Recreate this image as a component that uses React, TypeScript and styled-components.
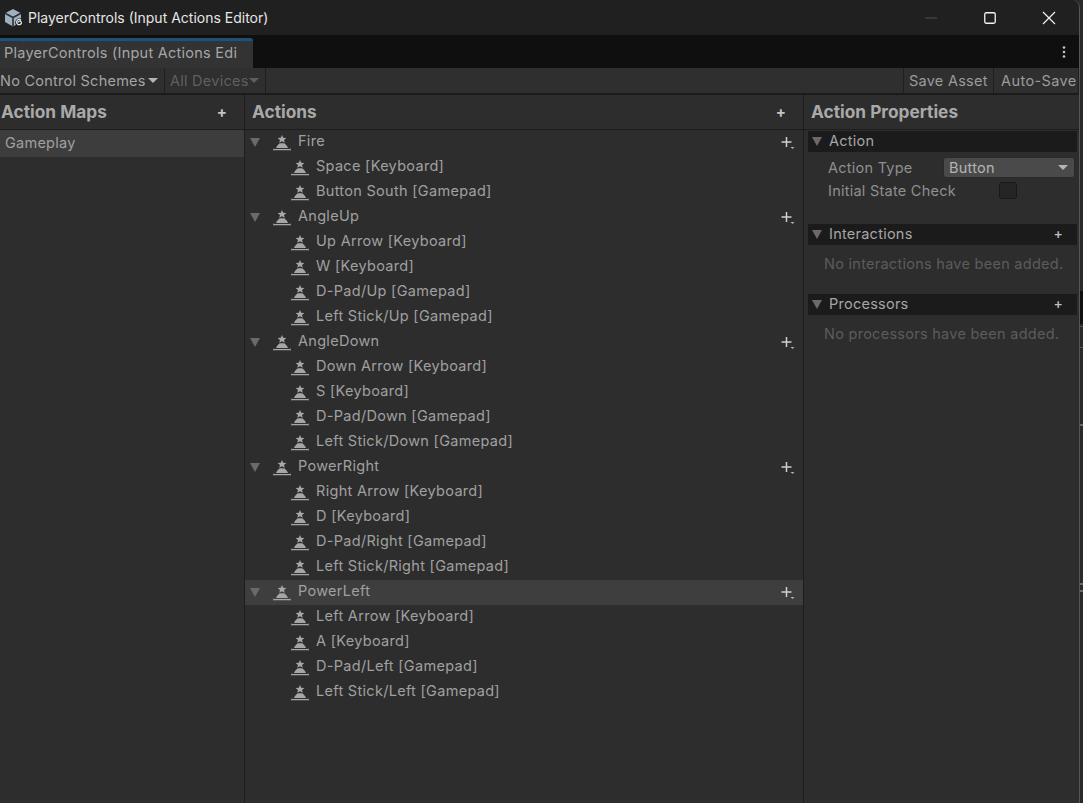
import React from "react"
import styled, { createGlobalStyle } from "styled-components"

const Global = createGlobalStyle`
  html, body {
    margin: 0;
    padding: 0;
    background: #2b2b2b;
  }
  body {
    font-family: Inter, "Noto Sans", sans-serif;
    font-size: 14.5px;
    color: #a8a8a8;
  }
`

const Page = styled.div`
  width: 1083px;
  height: 803px;
  display: flex;
  overflow: hidden;
  background: #2a2a2a;
`

const Window = styled.div`
  width: 1080px;
  flex: none;
  box-sizing: border-box;
  display: flex;
  flex-direction: column;
  background: #2d2d2d;
  border-right: 1px solid #565656;
  border-top-right-radius: 8px;
  overflow: hidden;
`

// the window behind this one peeks out at the right edge
const Backdrop = styled.div`
  flex: 1;
  position: relative;
`

const BehindMark = styled.div<{ $top: number; $height: number; $color: string }>`
  position: absolute;
  left: 0;
  right: 0;
  top: ${(p) => p.$top}px;
  height: ${(p) => p.$height}px;
  background: ${(p) => p.$color};
`

const TitleBar = styled.div`
  height: 35px;
  flex: none;
  display: flex;
  align-items: center;
  padding-left: 4px;
  background: #202020;
  color: #e6e6e6;
  font-size: 14px;
`

const TitleText = styled.span`
  margin-left: 4px;
  flex: 1;
`

const WinButton = styled.button`
  width: 59px;
  height: 32px;
  padding: 0;
  border: 0;
  background: none;
  display: flex;
  align-items: center;
  justify-content: center;
`

const WinButtons = styled.div`
  display: flex;
  margin-right: 1px;
`

const TabStrip = styled.div`
  height: 33px;
  flex: none;
  display: flex;
  align-items: flex-end;
  justify-content: space-between;
  background: #0f0f0f;
`

const Tab = styled.div`
  width: 253px;
  height: 30px;
  box-sizing: border-box;
  border-top: 3px solid #1f5279;
  border-top-right-radius: 3px;
  background: #333333;
  padding-left: 4px;
  color: #a6a6a6;
  font-size: 14.5px;
  letter-spacing: 0.25px;
  line-height: 24px;
  white-space: nowrap;
`

const Kebab = styled.div`
  width: 30px;
  height: 33px;
  display: flex;
  align-items: center;
  justify-content: center;
`

const Toolbar = styled.div`
  height: 27px;
  flex: none;
  box-sizing: border-box;
  display: flex;
  background: #2f2f2f;
  border-bottom: 2px solid #1b1b1b;
`

const ToolItem = styled.div<{ $dim?: boolean; $width: number }>`
  width: ${(p) => p.$width}px;
  box-sizing: border-box;
  border-right: 1px solid #1f1f1f;
  display: flex;
  align-items: center;
  justify-content: space-between;
  color: ${(p) => (p.$dim ? "#5f5f5f" : "#a4a4a4")};
  font-size: 14.5px;
  letter-spacing: 0.25px;
  padding: 0 6px 1px 0;
  white-space: nowrap;
`

const DimItem = styled(ToolItem)`
  padding-left: 5px;
`

const ToolSpacer = styled.div`
  flex: 1;
  border-right: 1px solid #1f1f1f;
`

const ToolButton = styled.div<{ $width: number; $pad: number; $spacing: number }>`
  width: ${(p) => p.$width}px;
  box-sizing: border-box;
  padding-left: ${(p) => p.$pad}px;
  border-right: 1px solid #1f1f1f;
  color: #9b9b9b;
  font-size: 14.5px;
  letter-spacing: ${(p) => p.$spacing}px;
  line-height: 25px;
  white-space: nowrap;
`

const Arrow = styled.span<{ $dim?: boolean }>`
  width: 0;
  height: 0;
  flex: none;
  border-left: 5px solid transparent;
  border-right: 5px solid transparent;
  border-top: 5px solid ${(p) => (p.$dim ? "#5f5f5f" : "#b4b4b4")};
`

const Columns = styled.div`
  flex: 1;
  display: grid;
  grid-template-columns: 245px 559px 275px;
  min-height: 0;
`

const Column = styled.div`
  border-right: 1px solid #1d1d1d;
  display: flex;
  flex-direction: column;
  min-height: 0;
  &:last-child {
    border-right: 0;
  }
`

const PanelHeader = styled.div<{ $pad: number; $plus?: number }>`
  height: 35px;
  flex: none;
  box-sizing: border-box;
  border-bottom: 1px solid #1d1d1d;
  display: flex;
  align-items: center;
  justify-content: space-between;
  padding: 0 ${(p) => p.$plus ?? 0}px 2px ${(p) => p.$pad}px;
  font-size: 17.3px;
  font-weight: 700;
  color: #a9a9a9;
`

const HeaderPlus = styled.span`
  font-size: 15px;
  font-weight: 700;
  color: #c4c4c4;
`

const MapRow = styled.div`
  height: 27px;
  line-height: 26px;
  padding-left: 5px;
  background: #3d3d3d;
  color: #a0a0a0;
  font-size: 14.5px;
  letter-spacing: 0.25px;
`

const ActionRow = styled.div<{ $selected?: boolean; $child?: boolean }>`
  height: 25px;
  display: flex;
  align-items: center;
  padding-left: ${(p) => (p.$child ? 46 : 5)}px;
  background: ${(p) => (p.$selected ? "#3e3e3e" : "none")};
  color: #a0a0a0;
  font-size: 14.5px;
  letter-spacing: 0.3px;
  white-space: nowrap;
`

const Fold = styled.span`
  width: 0;
  height: 0;
  flex: none;
  margin-right: 13px;
  border-left: 5px solid transparent;
  border-right: 5px solid transparent;
  border-top: 9px solid #6a6a6a;
`

const RowLabel = styled.span`
  margin-left: 7px;
  padding-bottom: 5px;
  flex: 1;
`

const AddSlot = styled.span`
  margin-right: 8px;
  width: 14px;
  height: 14px;
  flex: none;
`

const Properties = styled.div`
  padding: 1px 2px 0 4px;
  display: flex;
  flex-direction: column;
`

const SectionBar = styled.div`
  height: 21px;
  display: flex;
  align-items: center;
  padding-left: 4px;
  background: #1b1b1b;
  color: #a6a6a6;
  font-size: 14.5px;
  letter-spacing: 0.25px;
`

const SectionFold = styled.span`
  width: 0;
  height: 0;
  flex: none;
  margin-right: 7px;
  border-left: 5px solid transparent;
  border-right: 5px solid transparent;
  border-top: 9px solid #6a6a6a;
`

const SectionTitle = styled.span`
  flex: 1;
  padding-bottom: 2px;
`

const SectionPlus = styled.span`
  margin-right: 14px;
  padding-bottom: 2px;
  font-size: 14px;
  font-weight: 500;
  color: #c0c0c0;
`

const FieldList = styled.div`
  padding-top: 4px;
  height: 72px;
  box-sizing: border-box;
`

const FieldRow = styled.div`
  height: 23px;
  display: flex;
  align-items: center;
  padding-left: 20px;
  color: #8f8f8f;
  font-size: 14.5px;
  letter-spacing: 0.25px;
`

const FieldLabel = styled.span`
  width: 116px;
  flex: none;
  white-space: nowrap;
  padding-bottom: 1px;
`

const Select = styled.div`
  width: 132px;
  height: 21px;
  margin-left: -1px;
  box-sizing: border-box;
  border: 1px solid #2a2a2a;
  border-radius: 3px;
  background: #4a4a4a;
  display: flex;
  align-items: center;
  justify-content: space-between;
  padding: 0 6px 0 5px;
  color: #b4b4b4;
`

const Check = styled.span`
  width: 18px;
  height: 17px;
  box-sizing: border-box;
  margin-left: 55px;
  border: 1px solid #191919;
  border-radius: 3px;
  background: #252525;
`

const Empty = styled.div`
  height: 49px;
  padding: 10px 0 0 16px;
  box-sizing: border-box;
  color: #5c5c5c;
  font-size: 14.5px;
  letter-spacing: 0.27px;
  white-space: nowrap;
`

const InputIcon = () => (
  <svg width="18" height="16" viewBox="0 0 18 16" fill="none">
    <path d="M9 0 L10.2 2.8 L13.4 3.1 L11 5 L11.8 7.8 L9 6.3 L6.2 7.8 L7 5 L4.6 3.1 L7.8 2.8 Z" fill="#a8a8a8" />
    <path d="M6.4 8.6 C7.5 8.2 10.5 8.2 11.6 8.6 C13 9.8 14.4 11.4 15 13 H3 C3.6 11.4 5 9.8 6.4 8.6 Z" fill="#a6a6a6" />
    <path d="M0.5 14.6 H17.5" stroke="#a6a6a6" strokeWidth="1.3" />
    <path d="M0.5 13.6 V15.4 M17.5 13.6 V15.4" stroke="#8a8a8a" strokeWidth="1" />
  </svg>
)

const AddBinding = () => (
  <svg width="14" height="14" viewBox="0 0 14 14" fill="none">
    <path d="M5.5 1 V11 M0.5 6 H10.5" stroke="#cfcfcf" strokeWidth="1.5" />
    <path d="M9.5 11 H13.5 L11.5 13 Z" fill="#b0b0b0" />
  </svg>
)

const UnityLogo = () => (
  <svg width="20" height="20" viewBox="0 0 20 20" fill="none">
    <path d="M9 1 L17 5.2 V14 L9 18.5 L1 14 V5.2 Z" fill="#9fb0bf" />
    <path d="M9 9.5 L1 5.2 M9 9.5 L17 5.2 M9 9.5 V18.5" stroke="#2b3036" strokeWidth="1.6" />
    <circle cx="15.5" cy="14.5" r="4.3" fill="#202020" />
    <path d="M17 12.2 A2.6 2.6 0 1 0 17.4 15.4 A1.8 1.8 0 1 0 13.9 14.6" stroke="#e4e4e4" strokeWidth="1.2" />
  </svg>
)

const actions = [
  { name: "Fire", bindings: ["Space [Keyboard]", "Button South [Gamepad]"] },
  {
    name: "AngleUp",
    bindings: ["Up Arrow [Keyboard]", "W [Keyboard]", "D-Pad/Up [Gamepad]", "Left Stick/Up [Gamepad]"],
  },
  {
    name: "AngleDown",
    bindings: ["Down Arrow [Keyboard]", "S [Keyboard]", "D-Pad/Down [Gamepad]", "Left Stick/Down [Gamepad]"],
  },
  {
    name: "PowerRight",
    bindings: ["Right Arrow [Keyboard]", "D [Keyboard]", "D-Pad/Right [Gamepad]", "Left Stick/Right [Gamepad]"],
  },
  {
    name: "PowerLeft",
    bindings: ["Left Arrow [Keyboard]", "A [Keyboard]", "D-Pad/Left [Gamepad]", "Left Stick/Left [Gamepad]"],
  },
]

const App = (): JSX.Element => {
  return (
    <Page>
      <Global />
      <Window>
        <TitleBar>
          <UnityLogo />
          <TitleText>PlayerControls (Input Actions Editor)</TitleText>
          <WinButtons>
            <WinButton>
              <svg width="12" height="2" viewBox="0 0 12 2">
                <path d="M0 1 H12" stroke="#4e4e4e" />
              </svg>
            </WinButton>
            <WinButton>
              <svg width="12" height="12" viewBox="0 0 12 12" fill="none">
                <rect x="0.75" y="0.75" width="10.5" height="10.5" rx="1.5" stroke="#f2f2f2" strokeWidth="1.3" />
              </svg>
            </WinButton>
            <WinButton>
              <svg width="14" height="14" viewBox="0 0 14 14" fill="none">
                <path d="M1 1 L13 13 M13 1 L1 13" stroke="#f2f2f2" strokeWidth="1.2" />
              </svg>
            </WinButton>
          </WinButtons>
        </TitleBar>
        <TabStrip>
          <Tab>PlayerControls (Input Actions Edi</Tab>
          <Kebab>
            <svg width="4" height="12" viewBox="0 0 4 12" fill="#c4c4c4">
              <circle cx="2" cy="1.5" r="1.3" />
              <circle cx="2" cy="6" r="1.3" />
              <circle cx="2" cy="10.5" r="1.3" />
            </svg>
          </Kebab>
        </TabStrip>
        <Toolbar>
          <ToolItem $width={165}>
            No Control Schemes
            <Arrow />
          </ToolItem>
          <DimItem $dim $width={101}>
            All Devices
            <Arrow $dim />
          </DimItem>
          <ToolSpacer />
          <ToolButton $width={90} $pad={5} $spacing={0.25}>
            Save Asset
          </ToolButton>
          <ToolButton $width={85} $pad={7} $spacing={0.4}>
            Auto-Save
          </ToolButton>
        </Toolbar>
        <Columns>
          <Column>
            <PanelHeader $pad={1} $plus={17}>
              Action Maps
              <HeaderPlus>+</HeaderPlus>
            </PanelHeader>
            <MapRow>Gameplay</MapRow>
          </Column>
          <Column>
            <PanelHeader $pad={7} $plus={17}>
              Actions
              <HeaderPlus>+</HeaderPlus>
            </PanelHeader>
            {actions.map((action) => (
              <React.Fragment key={action.name}>
                <ActionRow $selected={action.name === "PowerLeft"}>
                  <Fold />
                  <InputIcon />
                  <RowLabel>{action.name}</RowLabel>
                  <AddSlot>
                    <AddBinding />
                  </AddSlot>
                </ActionRow>
                {action.bindings.map((binding) => (
                  <ActionRow $child key={binding}>
                    <InputIcon />
                    <RowLabel>{binding}</RowLabel>
                  </ActionRow>
                ))}
              </React.Fragment>
            ))}
          </Column>
          <Column>
            <PanelHeader $pad={7}>Action Properties</PanelHeader>
            <Properties>
              <SectionBar>
                <SectionFold />
                <SectionTitle>Action</SectionTitle>
              </SectionBar>
              <FieldList>
                <FieldRow>
                  <FieldLabel>Action Type</FieldLabel>
                  <Select>
                    Button
                    <Arrow />
                  </Select>
                </FieldRow>
                <FieldRow>
                  <FieldLabel>Initial State Check</FieldLabel>
                  <Check />
                </FieldRow>
              </FieldList>
              <SectionBar>
                <SectionFold />
                <SectionTitle>Interactions</SectionTitle>
                <SectionPlus>+</SectionPlus>
              </SectionBar>
              <Empty>No interactions have been added.</Empty>
              <SectionBar>
                <SectionFold />
                <SectionTitle>Processors</SectionTitle>
                <SectionPlus>+</SectionPlus>
              </SectionBar>
              <Empty>No processors have been added.</Empty>
            </Properties>
          </Column>
        </Columns>
      </Window>
      <Backdrop>
        <BehindMark $top={291} $height={33} $color="#111111" />
        <BehindMark $top={326} $height={1} $color="#555555" />
        <BehindMark $top={347} $height={1} $color="#555555" />
        <BehindMark $top={424} $height={2} $color="#6a6a6a" />
        <BehindMark $top={583} $height={2} $color="#6a6a6a" />
        <BehindMark $top={590} $height={2} $color="#6a6a6a" />
      </Backdrop>
    </Page>
  )
}

export default App
